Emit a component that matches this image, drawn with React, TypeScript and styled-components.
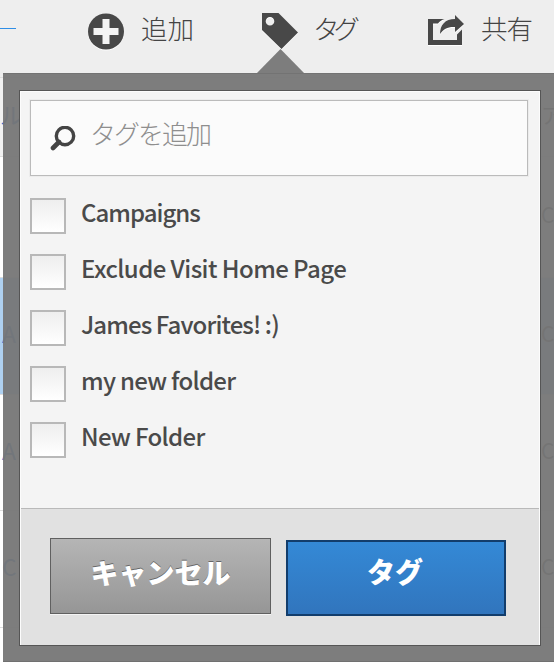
import React from "react";
import styled, { createGlobalStyle } from "styled-components";

const Global = createGlobalStyle`
  * { box-sizing: border-box; }
  body { margin: 0; overflow: hidden; background: #fff; font-family: "Noto Sans CJK JP", sans-serif; }
`;

const Page = styled.div`
  position: relative;
  width: 554px;
  height: 662px;
  overflow: hidden;
`;

const Toolbar = styled.header`
  display: flex;
  height: 77px;
  padding-left: 88px;
  background: #eee;
  position: relative;
`;

const Underline = styled.span`
  position: absolute;
  left: 0;
  top: 28px;
  width: 16px;
  height: 1px;
  background: #2f8ee6;
`;

const Action = styled.div<{ $width: number; $gap: number }>`
  display: flex;
  flex: none;
  width: ${(p) => p.$width}px;
  gap: ${(p) => p.$gap}px;
  svg { flex: none; filter: drop-shadow(0 1px 0 #fff); }
`;

const ActionLabel = styled.span<{ $spacing?: number }>`
  padding-top: 9px;
  font-size: 26.5px;
  line-height: 38px;
  font-weight: 300;
  letter-spacing: ${(p) => p.$spacing ?? 0}px;
  color: #444;
  white-space: nowrap;
`;

const Row = styled.div<{ $height: number; $color: string; $indent: number }>`
  display: flex;
  justify-content: space-between;
  align-items: center;
  height: ${(p) => p.$height}px;
  padding: 0 0 6px ${(p) => p.$indent}px;
  background: ${(p) => p.$color};
  border-top: 1px solid #ddd;
  font-size: 23px;
  line-height: 30px;
  color: #2b6fd0;
`;

const RowEnd = styled.span`
  width: 13px;
  font-size: 21px;
  white-space: nowrap;
  color: #555;
`;

const Popover = styled.section`
  position: absolute;
  left: 3px;
  top: 73px;
  width: 560px;
  height: 589px;
  padding: 16px 0 0 16px;
  background: rgba(118, 118, 118, 0.95);
  border-top: 1px solid #737373;
  border-bottom: 1px solid #707070;
`;

const Pointer = styled.svg`
  position: absolute;
  left: 256px;
  top: 49px;
`;

const Panel = styled.div`
  display: flex;
  flex-direction: column;
  width: 522px;
  height: 556px;
  border: 1px solid #555;
  background: #f4f4f4;
  box-shadow: inset 0 0 0 1px #fcfcfc;
`;

const Search = styled.div`
  display: flex;
  align-items: flex-start;
  flex: none;
  height: 76px;
  margin: 9px 12px 0 10px;
  padding: 25px 0 0 19px;
  gap: 13px;
  border: 1px solid #bbb;
  outline: 1px solid #ececec;
  background: #fbfbfb;
`;

const Placeholder = styled.span`
  margin-top: -12px;
  font-size: 26px;
  line-height: 38px;
  font-weight: 300;
  letter-spacing: -2px;
  color: #8e8e8e;
`;

const Options = styled.div`
  flex: 1;
  padding: 22px 0 0 10px;
`;

const Option = styled.label`
  display: flex;
  height: 56px;
  gap: 15px;
`;

const Checkbox = styled.span`
  width: 36px;
  height: 36px;
  border: 2px solid #b8b8b8;
  background: linear-gradient(#eee, #fff);
`;

const OptionText = styled.span<{ $spacing: number }>`
  margin-top: -5px;
  font-size: 24px;
  line-height: 38px;
  font-weight: 500;
  letter-spacing: ${(p) => p.$spacing}px;
  color: #4a4a4a;
`;

const Footer = styled.footer`
  display: flex;
  flex: none;
  gap: 15px;
  height: 137px;
  padding: 29px 0 0 29px;
  border-top: 1px solid #b9b9b9;
  background: #e1e1e1;
  margin: 0 1px;
`;

const Button = styled.button<{ $primary?: boolean }>`
  width: ${(p) => (p.$primary ? 220 : 221)}px;
  height: 76px;
  margin: ${(p) => (p.$primary ? "2px" : "0")} 0 0;
  padding: ${(p) => (p.$primary ? "0 2px 14px 0" : "0 0 8px")};
  border: ${(p) => (p.$primary ? "2px solid #123d6c" : "1px solid #606060")};
  background: ${(p) => (p.$primary ? "linear-gradient(#3489d6, #3175bd)" : "linear-gradient(#b5b5b5, #969696)")};
  box-shadow: ${(p) => (p.$primary ? "none" : "0 1px 0 #f4f4f4")};
  color: #fff;
  font: 900 28px/40px "Noto Sans CJK JP", sans-serif;
  text-shadow: ${(p) => (p.$primary ? "none" : "0 -1px 0 #666")};
`;

const options = [
  { text: "Campaigns", spacing: -1 },
  { text: "Exclude Visit Home Page", spacing: -0.56 },
  { text: "James Favorites! :)", spacing: -0.88 },
  { text: "my new folder", spacing: -0.7 },
  { text: "New Folder", spacing: -0.65 },
];

const rows = [
  { height: 79, color: "#f1f1f1", indent: 0, start: "ル", end: "ア" },
  { height: 121, color: "#fff", indent: 2, start: "", end: "C" },
  { height: 117, color: "#aed0f0", indent: 2, start: "A", end: "C" },
  { height: 116, color: "#fff", indent: 2, start: "A", end: "C" },
  { height: 117, color: "#fff", indent: 2, start: "C", end: "C" },
  { height: 40, color: "#fff", indent: 2, start: "", end: "" },
];

export default function App() {
  return (
    <Page>
      <Global />
      <Toolbar>
        <Underline />
        <Action $width={173} $gap={17}>
          <svg width="36" height="52" viewBox="0 0 36 52">
            <circle cx="18" cy="31.5" r="18" fill="#484848" />
            <path d="M14.5 19h7v9h9v7h-9v9h-7v-9h-9v-7h9z" fill="#f4f4f4" />
          </svg>
          <ActionLabel>追加</ActionLabel>
        </Action>
        <Action $width={167} $gap={14}>
          <svg width="38" height="52" viewBox="0 0 38 52">
            <path fillRule="evenodd" d="M1 13h16.5L37 32.5 20.5 49 1 30zM9 17a4.3 4.3 0 1 0 0 8.600A4.3 4.3 0 0 0 9 17z" fill="#484848" />
          </svg>
          <ActionLabel $spacing={-6}>タグ</ActionLabel>
        </Action>
        <Action $width={126} $gap={16}>
          <svg width="37" height="52" viewBox="0 0 37 52">
            <path d="M0 19h16.500c-3 1-5 2.500-6.500 4.500H5V40h24v-5.500l5-5V45H0z" fill="#484848" />
            <path d="M12 34c0-9 5-15 15-15v-4l9 9-9 8v-5c-7-.5-11.500 2-15 7z" fill="#484848" />
          </svg>
          <ActionLabel $spacing={-1}>共有</ActionLabel>
        </Action>
      </Toolbar>
      {rows.map((row, i) => (
        <Row key={i} $height={row.height} $color={row.color} $indent={row.indent}>
          <span>{row.start}</span>
          <RowEnd>{row.end}</RowEnd>
        </Row>
      ))}
      <Pointer width="49" height="25" viewBox="0 0 49 25">
        <path d="M0 25L24.500 0L49 25z" fill="#7d7d7d" />
      </Pointer>
      <Popover>
        <Panel>
          <Search>
            <svg width="27" height="26" viewBox="0 0 27 26">
              <circle cx="15" cy="10" r="8.700" fill="none" stroke="#444" strokeWidth="3.400" />
              <path d="M9 16L3 22" stroke="#444" strokeWidth="4.600" strokeLinecap="round" />
            </svg>
            <Placeholder>タグを追加</Placeholder>
          </Search>
          <Options>
            {options.map((o) => (
              <Option key={o.text}>
                <Checkbox />
                <OptionText $spacing={o.spacing}>{o.text}</OptionText>
              </Option>
            ))}
          </Options>
          <Footer>
            <Button>キャンセル</Button>
            <Button $primary>タグ</Button>
          </Footer>
        </Panel>
      </Popover>
    </Page>
  );
}
